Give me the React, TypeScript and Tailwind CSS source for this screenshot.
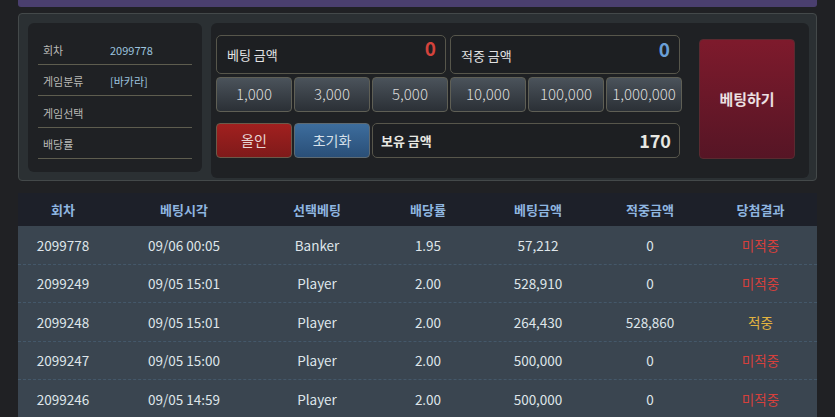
const font = "font-['Noto_Sans_CJK_KR','Noto_Sans',sans-serif]";

const info = [
  { label: "회차", value: "2099778" },
  { label: "게임분류", value: "[바카라]" },
  { label: "게임선택", value: "" },
  { label: "배당률", value: "" },
];

const chips = ["1,000", "3,000", "5,000", "10,000", "100,000", "1,000,000"];

const cols = [
  { title: "회차", w: "w-[90px]" },
  { title: "베팅시각", w: "w-[152px]" },
  { title: "선택베팅", w: "w-[114px]" },
  { title: "배당률", w: "w-[108px]" },
  { title: "베팅금액", w: "w-[112px]" },
  { title: "적중금액", w: "w-[112px]" },
  { title: "당첨결과", w: "w-[109px]" },
];

const rows = [
  ["2099778", "09/06 00:05", "Banker", "1.95", "57,212", "0", "미적중"],
  ["2099249", "09/05 15:01", "Player", "2.00", "528,910", "0", "미적중"],
  ["2099248", "09/05 15:01", "Player", "2.00", "264,430", "528,860", "적중"],
  ["2099247", "09/05 15:00", "Player", "2.00", "500,000", "0", "미적중"],
  ["2099246", "09/05 14:59", "Player", "2.00", "500,000", "0", "미적중"],
];

const boxCls = "rounded-[5px] border border-[#57564b] bg-[#1d1f22]";

export default function App() {
  return (
    <div className={`${font} min-h-[417px] w-[835px] overflow-hidden bg-[#202124] px-[18px]`}>
      <div className="h-[7px] rounded-b-[3px] bg-[#4a3f6e]" />

      <div className="mt-[6px] flex h-[168px] gap-[9px] rounded-[4px] border border-[#44494a] bg-[#2b3033] pl-[9px] pr-[7px] pt-[9px]">
        {/* round info */}
        <div className="h-[149px] w-[174px] rounded-[6px] bg-[#1f2124] px-[10px] pt-[10px]">
          {info.map((r) => (
            <div key={r.label} className="flex h-[31.5px] items-center border-b border-[#5e5d4f] pl-[5px] pt-[3px] text-[11px]">
              <span className="w-[67px] text-[#b9b9b6]">{r.label}</span>
              <span className="text-[#9cc3df]">{r.value}</span>
            </div>
          ))}
        </div>

        {/* betting panel */}
        <div className="flex h-[155px] flex-1 rounded-[6px] bg-[#1f2124] pl-[5px] pt-[12px]">
          <div className="flex w-[466px] flex-col">
            <div className="flex h-[39px] gap-[4px] pr-[2px]">
              <div className={`${boxCls} relative flex-1`}>
                <span className="absolute left-[10px] top-[9px] text-[13px] text-[#e2e2e2]">베팅 금액</span>
                <span className="absolute right-[9px] top-[-2px] text-[19px] font-bold text-[#d4433c]">0</span>
              </div>
              <div className={`${boxCls} relative flex-1`}>
                <span className="absolute left-[10px] top-[10px] text-[13px] text-[#e2e2e2]">적중 금액</span>
                <span className="absolute right-[9px] top-[-1px] text-[19px] font-bold text-[#6a9fd6]">0</span>
              </div>
            </div>

            <div className="mt-[3px] flex h-[35px] gap-[2px]">
              {chips.map((c) => (
                <button
                  key={c}
                  className="flex-1 rounded-[4px] border border-[#5f5f55] bg-gradient-to-b from-[#4b535b] to-[#2b3036] text-[15px] font-light text-[#dcdcdc]"
                >
                  {c}
                </button>
              ))}
            </div>

            <div className="mt-[11px] flex h-[35px] gap-[2px] pr-[2px]">
              <button className="w-[76px] rounded-[4px] border border-[#6b5a4a] bg-gradient-to-b from-[#a1201f] to-[#7f1a1a] text-[14px] text-[#e8d6d6]">
                올인
              </button>
              <button className="w-[76px] rounded-[4px] border border-[#5e6a72] bg-gradient-to-b from-[#3d6d9d] to-[#2a4f78] text-[14px] text-[#d6e0ea]">
                초기화
              </button>
              <div className={`${boxCls} flex flex-1 items-center justify-between px-[8px]`}>
                <span className="text-[13px] font-bold text-[#e8e8e2]">보유 금액</span>
                <span className="text-[18px] font-bold text-[#e8e8e2]">170</span>
              </div>
            </div>
          </div>

          <button className="ml-[17px] mt-[4px] flex h-[120px] w-[96px] items-center justify-center rounded-[4px] border border-[#5a2a30] bg-gradient-to-b from-[#7e1a2c] to-[#561525] text-[15px] font-bold text-[#ece0e2]">
            베팅하기
          </button>
        </div>
      </div>

      {/* history table */}
      <div className="mt-[12px]">
        <div className="flex h-[33px] items-center bg-[#1d2029]">
          {cols.map((c) => (
            <div key={c.title} className={`${c.w} text-center text-[13px] font-bold text-[#8fb6e0]`}>
              {c.title}
            </div>
          ))}
        </div>
        {rows.map((r) => (
          <div key={r[0]} className="flex h-[38.5px] items-center border-b border-dashed border-[#44586a] bg-[#3a4550]">
            {r.map((v, i) => {
              const color =
                i === 6 ? (v === "적중" ? "text-[#e2b33f]" : "text-[#d6403c]") : "text-[#dfe5ea]";
              return (
                <div key={i} className={`${cols[i].w} text-center text-[13.5px] ${color}`}>
                  {v}
                </div>
              );
            })}
          </div>
        ))}
      </div>
    </div>
  );
}
